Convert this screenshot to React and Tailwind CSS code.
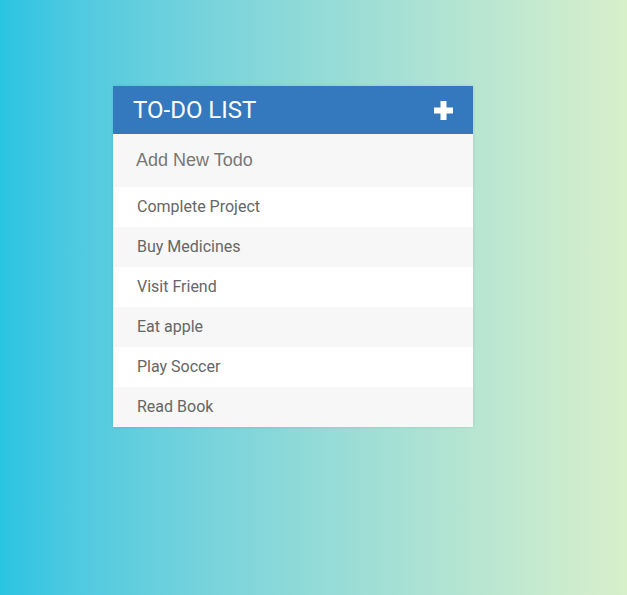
import React from 'react';

const todos = ['Complete Project', 'Buy Medicines', 'Visit Friend', 'Eat apple', 'Play Soccer', 'Read Book'];

const App = () => {
  return (
    <div className="w-full h-[595px] bg-gradient-to-r from-[#29c4e2] to-[#d8efca] font-['Roboto',sans-serif] pt-[86px]">
      <div className="w-[360px] ml-[113px] shadow-[0_0_3px_rgba(0,0,0,0.1)]">
        <div className="h-[48px] bg-[#3478bd] flex items-center justify-between pl-[20px] pr-[20px]">
          <h1 className="text-[24px] text-white font-normal uppercase leading-none">To-Do List</h1>
          <svg width="19" height="19" viewBox="0 0 19 19">
            <path d="M6.5 0h6v6.5h6.5v6h-6.5v6.5h-6v-6.5h-6.5v-6h6.5z" fill="#fff" />
          </svg>
        </div>
        <input
          type="text"
          placeholder="Add New Todo"
          className="block w-full h-[53px] bg-[#f7f7f7] px-[23px] text-[18px] font-['Liberation_Sans',Arial,sans-serif] text-[#666] placeholder:text-[#777] outline-none"
        />
        <ul>
          {todos.map((todo, i) => (
            <li
              key={todo}
              className={`h-[40px] flex items-center pl-[24px] text-[16px] text-[#666] ${i % 2 === 0 ? 'bg-white' : 'bg-[#f7f7f7]'}`}
            >
              {todo}
            </li>
          ))}
        </ul>
      </div>
    </div>
  );
};

export default App;
